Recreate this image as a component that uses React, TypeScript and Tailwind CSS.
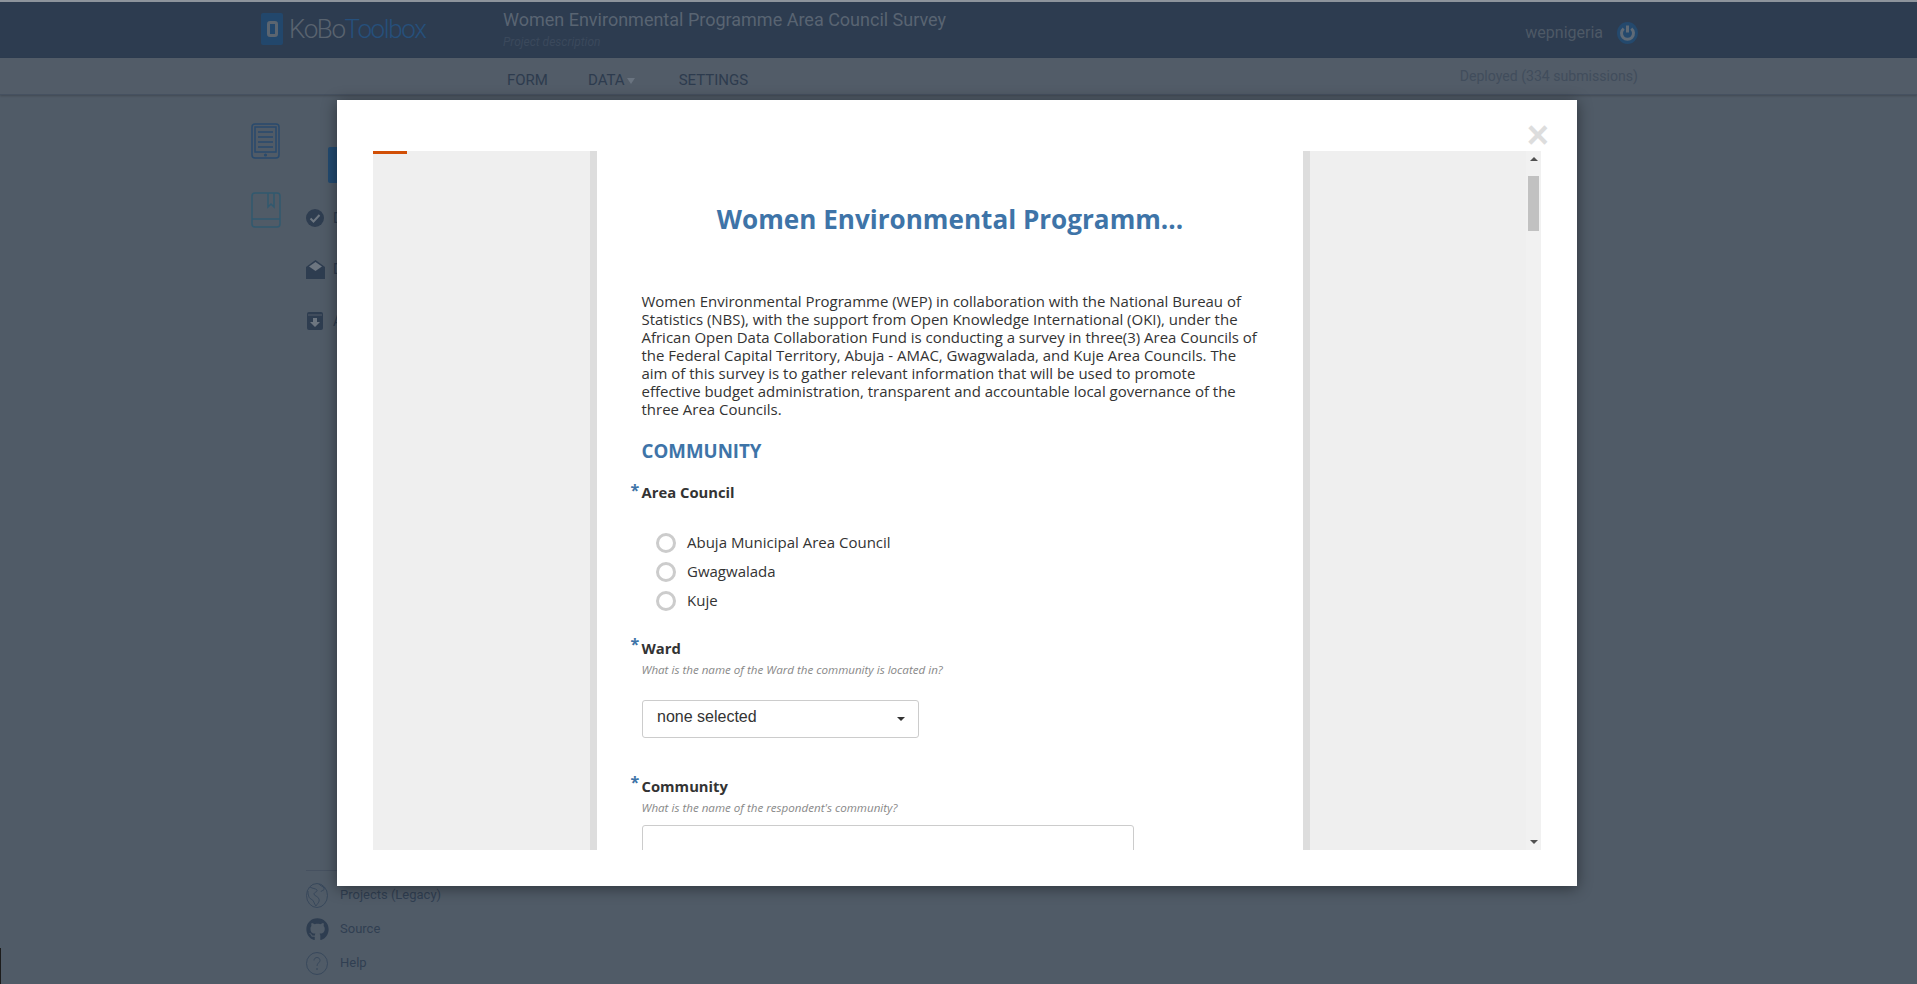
import React from "react";
import { FaGithub } from "react-icons/fa";

const Radio = ({ label }: { label: string }) => (
  <div className="flex h-[29px] items-center">
    <span className="ml-[14.5px] h-[20px] w-[20px] rounded-full border-[3px] border-[#cccccc] bg-white" />
    <span className="ml-[11px] text-[15px] text-[#333333]">{label}</span>
  </div>
);

const Label = ({ text, star = "top-[-4px]" }: { text: string; star?: string }) => (
  <div className="relative text-[14.8px] font-bold leading-[20px] text-[#333333]">
    <span className={`absolute left-[-11px] text-[16px] font-bold text-[#3e74a8] ${star}`}>*</span>
    {text}
  </div>
);

const Hint = ({ text }: { text: string }) => (
  <div className="mt-[4px] text-[11.6px] italic leading-[16px] text-[#888888]">{text}</div>
);

export default function App() {
  return (
    <div className="relative flex h-[984px] w-[1917px] flex-col overflow-hidden bg-[#505b67] font-['Roboto',sans-serif]">
      {/* header */}
      <header className="flex h-[58px] shrink-0 items-start border-t-[2px] border-[#8d949c] bg-[#2d3c50] pl-[261px] pr-[279px]">
        <div className="flex w-[242px] items-center pt-[11px]">
          <div className="flex h-[32px] w-[22px] items-center justify-center rounded-[2px] bg-[#22476c]">
            <div className="h-[16px] w-[11px] rounded-[3px] border-[3px] border-[#5b6570]" />
          </div>
          <span className="ml-[6px] text-[26px] font-light leading-[32px] tracking-[-1.4px] text-[#59636f]">KoBo</span>
          <span className="text-[26px] font-light leading-[32px] tracking-[-1.4px] text-[#26507c]">Toolbox</span>
        </div>
        <div className="flex flex-col pt-[7px]">
          <div className="text-[18px] leading-[22px] text-[#596472]">Women Environmental Programme Area Council Survey</div>
          <div className="mt-[3px] text-[12px] italic leading-[16px] text-[#3b495c]">Project description</div>
        </div>
        <div className="ml-auto flex items-center pt-[20px]">
          <span className="text-[16px] leading-[18px] text-[#4e5966]">wepnigeria</span>
          <svg className="ml-[14px]" width="21" height="22" viewBox="0 0 21 22">
            <ellipse cx="10.500" cy="11" rx="10.500" ry="11" fill="#24496d" />
            <path d="M6.700 6.700a6 6 0 1 0 7.600 0" fill="none" stroke="#5f6a76" strokeWidth="3" />
            <path d="M10.500 3.500v7" stroke="#5f6a76" strokeWidth="3" />
          </svg>
        </div>
      </header>

      {/* sub navigation */}
      <nav className="flex h-[37px] shrink-0 items-start border-b-[1px] border-[#465160] bg-[#525c68] pl-[507px] pr-[279px] shadow-[0_1px_2px_rgba(0,0,0,0.2)]">
        <span className="pt-[12px] text-[15px] leading-[20px] text-[#2d3b4e]">FORM</span>
        <span className="ml-[40px] flex items-center pt-[12px] text-[15px] leading-[20px] text-[#2d3b4e]">
          DATA
          <span className="ml-[2px] mt-[1px] h-0 w-0 border-x-[4px] border-t-[6px] border-x-transparent border-t-[#6a7480]" />
        </span>
        <span className="ml-[44px] pt-[12px] text-[15px] leading-[20px] text-[#2d3b4e]">SETTINGS</span>
        <span className="ml-auto pt-[9px] text-[14.1px] leading-[18px] text-[#414d5c]">Deployed (334 submissions)</span>
      </nav>

      {/* body */}
      <main className="flex min-h-0 flex-1 pl-[250px]">
        <div className="flex w-[56px] flex-col pl-[1px] pt-[28px]">
          <svg width="30" height="36" viewBox="0 0 30 36" fill="none" stroke="#294a6d" strokeWidth="1.5">
            <rect x="1" y="1" width="27" height="34" rx="3" />
            <rect x="4" y="4" width="21" height="25" />
            <path d="M7 9h15M7 14h15M7 19h15M7 24h15" strokeWidth="1.6" />
            <circle cx="14.500" cy="32" r="0.800" fill="#294a6d" />
          </svg>
          <svg className="mt-[33px]" width="30" height="36" viewBox="0 0 30 36" fill="none" stroke="#31596f" strokeWidth="1.5">
            <rect x="1" y="1" width="28" height="34" rx="3" />
            <path d="M1 27h28" />
            <path d="M17 1v14l3-3 3 3V1" />
          </svg>
        </div>
        <div className="flex flex-1 flex-col">
          <div className="ml-[22px] mt-[52px] h-[36px] w-[60px] rounded-[2px] bg-[#224a70]" />
          <div className="mt-[23px] flex flex-col">
            <div className="flex h-[24px] items-center">
              <svg width="18" height="18" viewBox="0 0 18 18">
                <circle cx="9" cy="9" r="9" fill="#2e3d50" />
                <path d="M4.500 9.500l3 3 6-6.500" fill="none" stroke="#6d7680" strokeWidth="2" />
              </svg>
              <span className="ml-[9px] text-[14px] text-[#2e3d50]">Deployed</span>
            </div>
            <div className="mt-[27px] flex h-[24px] items-center">
              <svg width="19" height="19" viewBox="0 0 19 19">
                <path d="M0 7L9.500 0 19 7v12H0z" fill="#2e3d50" />
                <path d="M3 6.500L9.500 2 16 6.500 9.500 11z" fill="#6d7680" />
              </svg>
              <span className="ml-[8px] text-[14px] text-[#2e3d50]">Drafts</span>
            </div>
            <div className="mt-[28px] flex h-[24px] items-center">
              <svg width="18" height="18" viewBox="0 0 18 18">
                <rect x="1" y="0" width="16" height="18" rx="2" fill="#2e3d50" />
                <path d="M2 3h14" stroke="#525c68" strokeWidth="1" />
                <path d="M7 6h4v4h3l-5 5-5-5h3z" fill="#6d7680" />
              </svg>
              <span className="ml-[9px] text-[14px] text-[#2e3d50]">Archived</span>
            </div>
          </div>
          <div className="mt-auto flex w-[400px] flex-col border-t-[1px] border-[#465160] pb-[4px] pt-[7px]">
            <div className="flex h-[34px] items-center text-[13px] text-[#303f52]">
              <svg className="shrink-0" width="22" height="25" viewBox="0 0 22 25" fill="none" stroke="#36465a" strokeWidth="0.9">
                <ellipse cx="11" cy="12.500" rx="10.500" ry="12" />
                <path d="M4 4c3 2 5 1 7 3 1 2-3 2-3 4s4 2 5 5-2 5-3 7c-2-2-2-6-5-7S2 9 2 8M13 1c1 2 4 2 5 4 1 3-3 2-3 4" />
              </svg>
              <span className="ml-[12px]">Projects (Legacy)</span>
            </div>
            <div className="flex h-[34px] items-center text-[13px] text-[#303f52]">
              <FaGithub className="shrink-0 text-[#2e3d50]" size={23} />
              <span className="ml-[11px]">Source</span>
            </div>
            <div className="flex h-[34px] items-center text-[13px] text-[#303f52]">
              <svg className="shrink-0" width="22" height="23" viewBox="0 0 22 23" fill="none" stroke="#36465a" strokeWidth="0.9">
                <ellipse cx="11" cy="11.500" rx="10.500" ry="11" />
                <path d="M8 8.500c0-4 6-4 6 0 0 2-3 2.500-3 5.500" />
                <circle cx="11" cy="17" r="0.500" />
              </svg>
              <span className="ml-[12px]">Help</span>
            </div>
          </div>
        </div>
      </main>

      {/* clipped corner mark */}
      <div className="absolute bottom-0 left-0 h-[36px] w-[1px] bg-[#1c1c1c]" />

      {/* modal */}
      <div className="absolute left-[337px] top-[100px] flex h-[786px] w-[1240px] flex-col bg-white pb-[36px] pl-[36px] pr-[36px] pt-[51px] font-['Open_Sans',sans-serif] shadow-[0_2px_14px_rgba(0,0,0,0.45)]">
        <span className="absolute right-[28px] top-[26px] font-['Liberation_Sans',sans-serif] text-[38px] font-bold leading-[18px] text-[#dddddd]">×</span>
        <div className="flex min-h-0 flex-1 bg-[#efefef]">
          <div className="w-[224px] shrink-0 border-r-[7px] border-[#dddddd]">
            <div className="h-[3px] w-[34px] bg-[#d14f06]" />
          </div>
          <div className="w-[706px] shrink-0 overflow-hidden bg-white pl-[44.5px] pr-[44.5px]">
            <h1 className="mt-[50px] text-center text-[26.1px] font-bold leading-[36px] text-[#3e74a8]">Women Environmental Programm...</h1>
            <p className="mt-[55px] text-[14.97px] leading-[18px] text-[#333333]">
              Women Environmental Programme (WEP) in collaboration with the National Bureau of Statistics (NBS), with the support from Open Knowledge International (OKI), under the African Open Data Collaboration Fund is conducting a survey in three(3) Area Councils of the Federal Capital Territory, Abuja - AMAC, Gwagwalada, and Kuje Area Councils. The aim of this survey is to gather relevant information that will be used to promote<br />effective budget administration, transparent and accountable local governance of the<br />three Area Councils.
            </p>
            <h2 className="mt-[19px] text-[18.7px] font-bold leading-[28px] text-[#3e74a8]">COMMUNITY</h2>
            <div className="mt-[17px]"><Label text="Area Council" star="top-[-2px]" /></div>
            <div className="mt-[26px] flex flex-col">
              <Radio label="Abuja Municipal Area Council" />
              <Radio label="Gwagwalada" />
              <Radio label="Kuje" />
            </div>
            <div className="mt-[23px]"><Label text="Ward" /></div>
            <Hint text="What is the name of the Ward the community is located in?" />
            <div className="mt-[22px] flex h-[38px] w-[277px] items-center justify-between rounded-[3px] border-[1px] border-[#cccccc] pl-[14.5px] pr-[13px] font-['Liberation_Sans',sans-serif] text-[16px] text-[#333333]">
              <span className="relative top-[-2px]">none selected</span>
              <span className="h-0 w-0 border-x-[4px] border-t-[4px] border-x-transparent border-t-[#333333]" />
            </div>
            <div className="mt-[38px]"><Label text="Community" /></div>
            <Hint text="What is the name of the respondent's community?" />
            <div className="mt-[9px] h-[38px] w-[492px] rounded-[3px] border-[1px] border-[#cccccc]" />
          </div>
          <div className="flex min-w-0 flex-1 border-l-[7px] border-[#dddddd]">
            <div className="flex-1" />
            <div className="flex w-[15px] flex-col items-center bg-[#f1f1f1]">
              <span className="mt-[6px] h-0 w-0 border-x-[4px] border-b-[4px] border-x-transparent border-b-[#505050]" />
              <div className="mt-[15px] h-[55px] w-[11px] bg-[#c1c1c1]" />
              <div className="flex-1" />
              <span className="mb-[6px] h-0 w-0 border-x-[4px] border-t-[4px] border-x-transparent border-t-[#505050]" />
            </div>
          </div>
        </div>
      </div>
    </div>
  );
}
